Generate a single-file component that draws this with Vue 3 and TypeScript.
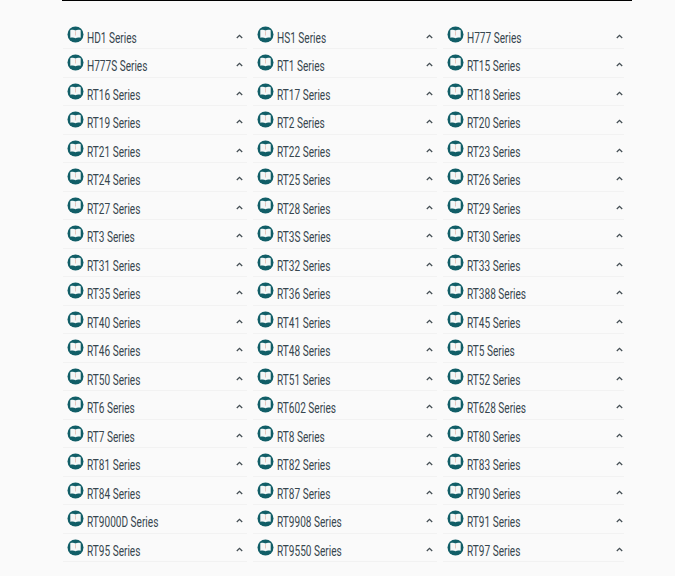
<script setup lang="ts">
const names: string[] = [
  'HD1','HS1','H777','H777S','RT1','RT15','RT16','RT17','RT18','RT19','RT2','RT20','RT21','RT22','RT23','RT24','RT25','RT26','RT27','RT28','RT29','RT3','RT3S','RT30','RT31','RT32','RT33','RT35','RT36','RT388','RT40','RT41','RT45','RT46','RT48','RT5','RT50','RT51','RT52','RT6','RT602','RT628','RT7','RT8','RT80','RT81','RT82','RT83','RT84','RT87','RT90','RT9000D','RT9908','RT91','RT95','RT9550','RT97'
]
</script>

<template>
  <div class="page">
    <div class="panel">
      <div class="grid">
        <div v-for="n in names" :key="n" class="row">
          <svg class="icon" width="17" height="17" viewBox="0 0 17 17">
            <circle cx="8.5" cy="8.500" r="8" fill="#115e67" />
            <path d="M3.300 4.200c2-.7 3.900-.5 5.200.4c1.300-.9 3.200-1.100 5.200-.4v7.600c-2-.6-3.900-.4-5.200.5c-1.300-.9-3.200-1.100-5.200-.5z" fill="#f3f7f7" />
            <path d="M8.500 5.200v4.300" stroke="#e6c4bc" stroke-width="1" />
          </svg>
          <span class="label">{{ n }} Series</span>
          <svg class="chev" width="7" height="5" viewBox="0 0 7 5">
            <path d="M0.800 4L3.500 1.300L6.200 4" fill="none" stroke="#454f55" stroke-width="1.300" />
          </svg>
        </div>
      </div>
    </div>
  </div>
</template>

<style>
html, body { margin: 0; background: #fafafa; }
</style>

<style scoped>
.page {
  width: 675px;
  height: 576px;
  overflow: hidden;
  padding-left: 62px;
  box-sizing: border-box;
}
.panel {
  width: 570px;
  height: 576px;
  border-top: 1px solid #000;
  box-sizing: border-box;
  padding: 19.5px 0 0 1px;
}
.grid {
  display: grid;
  grid-template-columns: repeat(3, 184px);
  column-gap: 6px;
  grid-auto-rows: 28.5px;
}
.row {
  display: flex;
  align-items: flex-start;
  border-bottom: 1px solid #f2f2f2;
  box-sizing: border-box;
  padding-left: 4px;
}
.row:nth-child(3n) {
  margin-right: 3px;
}
.row:nth-child(3n) .chev {
  margin-right: 1px;
}
.icon {
  flex: none;
  margin-top: 5px;
}
.label {
  flex: 1;
  margin: 9px 0 0 3px;
  font-family: "Roboto", sans-serif;
  font-size: 14px;
  line-height: 17px;
  color: #37464e;
  white-space: nowrap;
  transform: scaleX(0.72);
  transform-origin: left center;
}
.chev {
  flex: none;
  margin: 13px 4px 0 0;
}
</style>
